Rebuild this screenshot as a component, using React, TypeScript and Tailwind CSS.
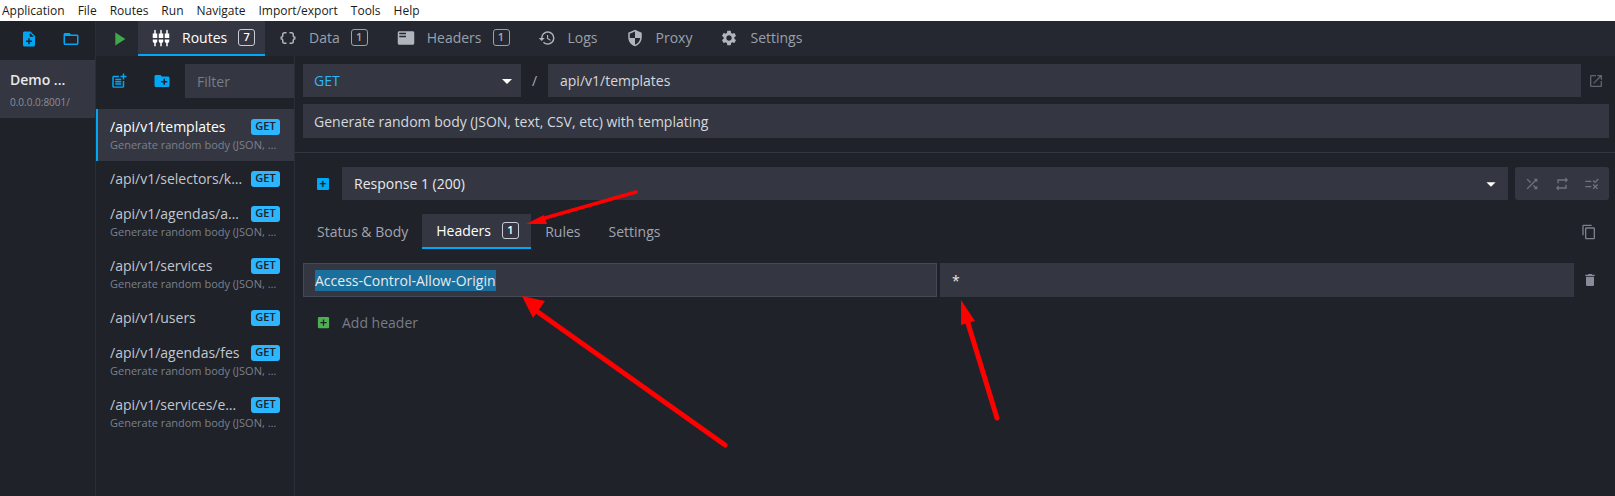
import {
  MdAddBox,
  MdArrowDropDown,
  MdContentCopy,
  MdCreateNewFolder,
  MdDataObject,
  MdDelete,
  MdFeaturedPlayList,
  MdFolderOpen,
  MdHistory,
  MdNoteAdd,
  MdOpenInNew,
  MdPlayArrow,
  MdPostAdd,
  MdRepeat,
  MdRule,
  MdSecurity,
  MdSettings,
  MdSettingsInputComponent,
  MdShuffle,
} from 'react-icons/md';

const menuItems = ['Application', 'File', 'Routes', 'Run', 'Navigate', 'Import/export', 'Tools', 'Help'];

const routes = [
  { path: '/api/v1/templates', active: true, desc: true },
  { path: '/api/v1/selectors/kinds', desc: false },
  { path: '/api/v1/agendas/attendees', desc: true },
  { path: '/api/v1/services', desc: true },
  { path: '/api/v1/users', desc: false },
  { path: '/api/v1/agendas/fes', desc: true },
  { path: '/api/v1/services/easy', desc: true },
];

function Badge({ value, active }: { value: number; active?: boolean }) {
  return (
    <span
      className={`ml-[11px] flex h-[17px] w-[17px] items-center justify-center rounded-[3px] border text-[11px] font-semibold ${
        active ? 'border-[#c8ccd4] text-white' : 'border-[#9aa0ac] text-[#a6abb6]'
      }`}
    >
      {value}
    </span>
  );
}

function TopTab({ icon, label, badge, active, className }: { icon: React.ReactNode; label: string; badge?: number; active?: boolean; className?: string }) {
  return (
    <div
      className={`flex h-full items-center border-b-2 text-[14px] ${
        active ? 'border-[#00a7f5] bg-[#343741] text-white' : 'border-transparent text-[#99a0ad]'
      } ${className ?? ''}`}
    >
      <span className={`mr-[12px] text-[18px] ${active ? 'text-white' : 'text-[#b0b4bd]'}`}>{icon}</span>
      {label}
      {badge !== undefined && <Badge value={badge} active={active} />}
    </div>
  );
}

function RouteItem({ path, active, desc }: { path: string; active?: boolean; desc: boolean }) {
  return (
    <div
      className={`flex flex-col justify-center border-l-2 pl-[12px] pr-[14px] ${desc ? 'h-[52px]' : 'h-[35px]'} ${
        active ? 'border-[#00a7f5] bg-[#343741]' : 'border-transparent'
      }`}
    >
      <div className="flex items-center gap-2">
        <span className={`min-w-0 flex-1 truncate text-[14px] leading-[18px] ${active ? 'text-white' : 'text-[#c2c6ce]'}`}>{path}</span>
        <span className="flex h-[16px] w-[29px] shrink-0 items-center justify-center rounded-[3px] bg-[#2bb6ff] text-[11px] font-semibold text-[#1f2229]">
          GET
        </span>
      </div>
      {desc && <div className="mt-[1px] truncate text-[11px] leading-[16px] text-[#7b808c]">Generate random body (JSON, text, CSV, etc) with templating</div>}
    </div>
  );
}

function Arrows() {
  return (
    <svg className="pointer-events-none absolute left-0 top-0" width="1615" height="496" viewBox="0 0 1615 496" fill="none">
      <path d="M636 192 L538 220" stroke="#ff0000" strokeWidth="3.5" strokeLinecap="round" />
      <path d="M526 224 L544 215 L547 224 Z" fill="#ff0000" />
      <path d="M725 445 L535 310" stroke="#ff0000" strokeWidth="5" strokeLinecap="round" />
      <path d="M522 296 L545 301 L533 318 Z" fill="#ff0000" />
      <path d="M997 418 L967 320" stroke="#ff0000" strokeWidth="5" strokeLinecap="round" />
      <path d="M961 300 L975 321 L961 325 Z" fill="#ff0000" />
    </svg>
  );
}

export default function App() {
  return (
    <div className="relative flex h-[496px] w-[1615px] flex-col overflow-hidden bg-[#1f2229] font-['Open_Sans',sans-serif]">
      <div className="flex h-[21px] items-center gap-[13px] bg-white pl-[2px] text-[12px] text-[#1a1a1a]">
        {menuItems.map((item) => (
          <span key={item}>{item}</span>
        ))}
      </div>

      <div className="flex min-h-0 flex-1">
        {/* environments */}
        <div className="w-[96px] shrink-0 border-r border-[#2b2e37]">
          <div className="flex h-[35px] items-center text-[#00a7f5]">
            <MdNoteAdd className="ml-[20px] text-[18px]" />
            <MdFolderOpen className="ml-[24px] text-[18px]" />
          </div>
          <div className="mt-[4px] flex h-[58px] flex-col justify-center bg-[#343741] pl-[10px]">
            <div className="text-[14px] font-semibold leading-[20px] text-[#e8e9ec]">Demo ...</div>
            <div className="mt-[5px] text-[10px] leading-[14px] text-[#8a8f9a]">0.0.0.0:8001/</div>
          </div>
        </div>

        <div className="flex min-w-0 flex-1 flex-col">
          {/* top tabs */}
          <div className="flex h-[35px] shrink-0 items-center bg-[#252830]">
            <MdPlayArrow className="ml-[12px] mr-[8px] text-[22px] text-[#3ea84a]" />
            <TopTab icon={<MdSettingsInputComponent />} label="Routes" badge={7} active className="w-[127px] pl-[14px]" />
            <TopTab icon={<MdDataObject />} label="Data" badge={1} className="ml-[14px]" />
            <TopTab icon={<MdFeaturedPlayList />} label="Headers" badge={1} className="ml-[29px]" />
            <TopTab icon={<MdHistory />} label="Logs" className="ml-[28px]" />
            <TopTab icon={<MdSecurity />} label="Proxy" className="ml-[28px]" />
            <TopTab icon={<MdSettings />} label="Settings" className="ml-[28px]" />
          </div>

          <div className="flex min-h-0 flex-1">
            {/* route list */}
            <div className="flex w-[199px] shrink-0 flex-col border-r border-[#2b2e37]">
              <div className="mt-[8px] flex h-[34px] items-center text-[#00a7f5]">
                <MdPostAdd className="ml-[14px] text-[18px]" />
                <MdCreateNewFolder className="ml-[25px] text-[18px]" />
                <div className="ml-[14px] flex h-full flex-1 items-center bg-[#343741] pl-[12px] text-[14px] text-[#777c88]">Filter</div>
              </div>
              <div className="mt-[11px] flex flex-col">
                {routes.map((route) => (
                  <RouteItem key={route.path} {...route} />
                ))}
              </div>
            </div>

            {/* route detail */}
            <div className="min-w-0 flex-1 pt-[8px]">
              <div className="pl-[8px] pr-[6px]">
                <div className="flex h-[33px] items-stretch">
                  <div className="flex w-[218px] items-center justify-between bg-[#343741] pl-[11px] pr-[2px] text-[14px] text-[#2bb6ff]">
                    GET
                    <MdArrowDropDown className="text-[24px] text-white" />
                  </div>
                  <div className="flex w-[27px] items-center justify-center text-[14px] text-[#a6abb6]">/</div>
                  <div className="flex w-[1033px] items-center bg-[#343741] pl-[12px] text-[14px] text-[#d5d8de]">api/v1/templates</div>
                  <div className="flex flex-1 items-center justify-end pr-[5px] text-[#5f6470]">
                    <MdOpenInNew className="text-[16px]" />
                  </div>
                </div>
                <div className="mt-[7px] flex h-[34px] items-center bg-[#343741] pl-[11px] text-[14px] text-[#d5d8de]">
                  Generate random body (JSON, text, CSV, etc) with templating
                </div>
              </div>

              <div className="mt-[14px] h-px bg-[#343741]" />

              <div className="pl-[8px] pr-[6px] pt-[14px]">
                <div className="flex h-[33px] items-stretch">
                  <div className="flex w-[39px] items-center pl-[14px] text-[#00a7f5]">
                    <span className="relative flex h-[12px] w-[12px] items-center justify-center rounded-[1px] bg-[#00a7f5] text-[12px] font-bold leading-none text-[#1f2229]">+</span>
                  </div>
                  <div className="flex flex-1 items-center justify-between bg-[#343741] pl-[12px] pr-[6px] text-[14px] text-[#e8e9ec]">
                    Response 1 (200)
                    <MdArrowDropDown className="text-[22px] text-white" />
                  </div>
                  <div className="ml-[7px] flex w-[94px] items-center justify-between rounded-[3px] bg-[#343741] px-[9px] text-[#6f7480]">
                    <MdShuffle className="text-[16px]" />
                    <MdRepeat className="text-[16px]" />
                    <MdRule className="text-[16px]" />
                  </div>
                </div>

                <div className="mt-[14px] flex h-[35px] items-center text-[14px] text-[#a0a5b0]">
                  <span className="ml-[14px]">Status &amp; Body</span>
                  <div className="ml-[14px] flex h-full w-[109px] items-center border-b-2 border-[#00a7f5] bg-[#343741] pl-[14px] text-white">
                    Headers
                    <Badge value={1} active />
                  </div>
                  <span className="ml-[14px]">Rules</span>
                  <span className="ml-[28px]">Settings</span>
                  <MdContentCopy className="ml-auto mr-[12px] text-[16px] text-[#7b808c]" />
                </div>

                <div className="mt-[14px] flex h-[34px] items-stretch">
                  <div className="flex w-[634px] items-center border border-[#454955] bg-[#343741] pl-[11px] text-[14px] text-[#e8e9ec]">
                    <span className="bg-[#1b6f9c]">Access-Control-Allow-Origin</span>
                  </div>
                  <div className="ml-[3px] flex w-[634px] items-center bg-[#343741] pl-[12px] text-[14px] text-[#e8e9ec]">*</div>
                  <div className="flex flex-1 items-center justify-end pr-[11px] text-[#878c98]">
                    <MdDelete className="text-[16px]" />
                  </div>
                </div>

                <div className="mt-[15px] flex items-center pl-[14px] text-[14px] text-[#777c88]">
                  <MdAddBox className="-ml-[1px] text-[15px] text-[#4caf50]" />
                  <span className="ml-[11px]">Add header</span>
                </div>
              </div>
            </div>
          </div>
        </div>
      </div>

      <Arrows />
    </div>
  );
}
